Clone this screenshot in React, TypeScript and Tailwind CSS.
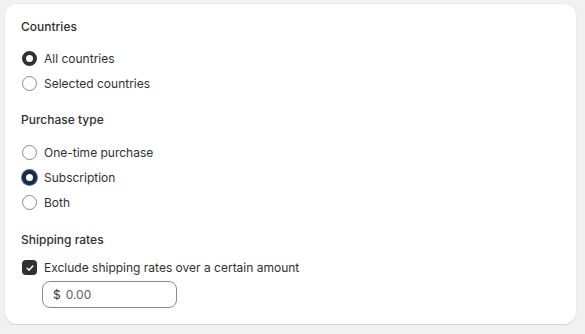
import React from "react";

function Radio({ label, checked, focused }: { label: string; checked?: boolean; focused?: boolean }) {
  return (
    <div className="flex items-center h-[25px] gap-[7px]">
      {checked ? (
        <span
          className={
            "w-[15px] h-[15px] ml-[1px] rounded-full border-[4px] bg-white box-border " +
            (focused ? "border-[#1b2a3f] shadow-[0_0_0_1px_#4a6fa8]" : "border-[#303030]")
          }
        />
      ) : (
        <span className="w-[15px] h-[15px] ml-[1px] rounded-full border border-[#8a8a8a] bg-white box-border" />
      )}
      <span className="text-[12px] leading-5 text-[#303030]">{label}</span>
    </div>
  );
}

export default function App() {
  return (
    <div
      className="w-[585px] h-[334px] bg-[#f1f1f1] pt-1 pl-[5px] pr-[9px]"
      style={{ fontFamily: "Inter, 'Noto Sans', sans-serif" }}
    >
      <div className="bg-white rounded-xl h-[320px] shadow-[0_1px_0_0_#d4d4d4,0_0_0_1px_#ececec] pt-[13px] px-4">
        <div className="text-[12px] leading-5 font-medium text-[#303030]">Countries</div>
        <div className="mt-[9px]">
          <Radio label="All countries" checked />
          <Radio label="Selected countries" />
        </div>
        <div className="mt-[14px] text-[12px] leading-5 font-medium text-[#303030]">Purchase type</div>
        <div className="mt-[10px]">
          <Radio label="One-time purchase" />
          <Radio label="Subscription" checked focused />
          <Radio label="Both" />
        </div>
        <div className="mt-[15px] text-[12px] leading-5 font-medium text-[#303030]">Shipping rates</div>
        <div className="mt-[6px] flex items-center h-[23px] gap-[7px]">
          <span className="w-[15px] h-[15px] ml-[1px] rounded-[4px] bg-[#303030] flex items-center justify-center">
            <svg width="10" height="10" viewBox="0 0 10 10" fill="none">
              <path d="M2.2 5.2 L4.2 7.1 L7.8 3" stroke="white" strokeWidth="1.5" strokeLinecap="round" strokeLinejoin="round" />
            </svg>
          </span>
          <span className="text-[12px] leading-5 text-[#303030]">Exclude shipping rates over a certain amount</span>
        </div>
        <div className="mt-[2px] ml-[21px] w-[135px] h-[27px] rounded-lg border border-[#8a8a8a] flex items-center px-[10px] gap-[5px] text-[12px] text-[#303030]">
          <span>$</span>
          <span className="text-[#616161]">0.00</span>
        </div>
      </div>
    </div>
  );
}
